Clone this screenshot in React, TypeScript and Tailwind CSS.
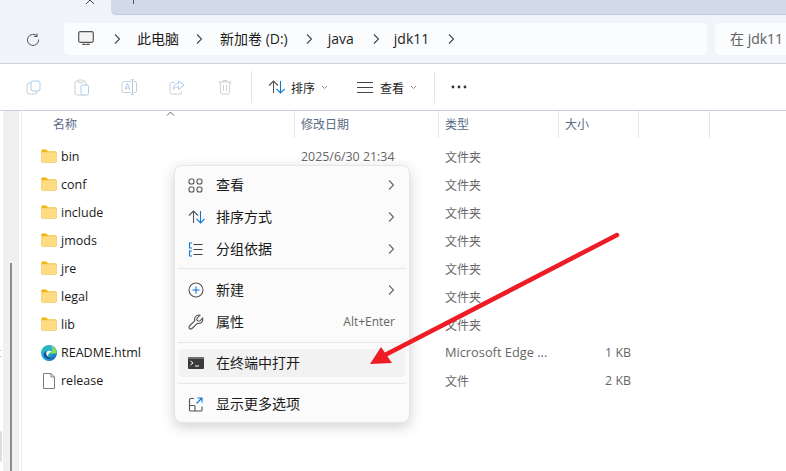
import React from "react";

const Font = "font-['Open_Sans','Noto_Sans_CJK_SC',sans-serif]";

function Folder() {
  return (
    <svg width="16" height="14" viewBox="0 0 16 14" className="shrink-0">
      <path d="M0.5 2a1 1 0 0 1 1-1.5h3.6l2 2H14.5a1 1 0 0 1 1 1v1H0.5z" fill="#f5b100" />
      <rect x="0.5" y="3" width="15" height="10.5" rx="1" fill="#fedc82" stroke="#eec35a" strokeWidth="0.6" />
    </svg>
  );
}

function Edge() {
  return (
    <svg width="16" height="16" viewBox="0 0 16 16" className="shrink-0">
      <defs>
        <linearGradient id="eg" x1="0" y1="0" x2="1" y2="1">
          <stop offset="0" stopColor="#2fc2a8" />
          <stop offset="0.55" stopColor="#2aa5dc" />
          <stop offset="1" stopColor="#0c59a4" />
        </linearGradient>
      </defs>
      <circle cx="8" cy="8" r="8" fill="url(#eg)" />
      <path d="M15.5 6.5C15 3 12 1.6 9 1.8 12 3 11.5 6 10.5 6.8 9.5 5.6 6.5 5.6 5.4 7.6 4.6 9.5 5.8 12 8.6 12.2 6.5 11 7 8.6 9 8.6h6.4z" fill="#7fe05a" />
      <path d="M5.5 8C5.5 11.5 8.5 13.5 12 12.6 10 14.6 5 14.8 3 11 2.3 9.5 3 6.8 5.5 6z" fill="#0e4f95" />
      <path d="M7.6 8.6a2.6 2.6 0 0 1 3-1.6c-.2-1.4-4-2.4-5.2.6C5 9 5.6 11 7 11.6 7 10.6 7 9.4 7.6 8.6z" fill="#fff" />
    </svg>
  );
}

function FileIcon() {
  return (
    <svg width="14" height="16" viewBox="0 0 14 16" className="shrink-0">
      <path d="M1.5.5h7.5l3.5 3.5v11.5h-11z" fill="#fff" stroke="#7c7c7c" />
      <path d="M9 .5V4h3.5" fill="none" stroke="#7c7c7c" />
    </svg>
  );
}

function Chevron({ c = "#555" }: { c?: string }) {
  return (
    <svg width="8" height="12" viewBox="0 0 8 12">
      <path d="M2 1.5L6.5 6 2 10.5" fill="none" stroke={c} strokeWidth="1.1" />
    </svg>
  );
}

function SortIcon() {
  return (
    <svg width="18" height="14" viewBox="0 0 18 14" fill="none" strokeWidth="1.1">
      <path d="M5.5 13V1M1 5.5L5.5 1 10 5.5" stroke="#555" />
      <path d="M12.5 1v12M8.5 8.8L12.5 13l4.2-4.2" stroke="#0a78d7" />
    </svg>
  );
}

function TinyDown() {
  return (
    <svg width="7" height="5" viewBox="0 0 7 5">
      <path d="M1 1l2.5 2.5L6 1" fill="none" stroke="#888" />
    </svg>
  );
}

const rows = [
  { n: "bin", i: "f", d: "2025/6/30 21:34", t: "文件夹" },
  { n: "conf", i: "f", t: "文件夹" },
  { n: "include", i: "f", t: "文件夹" },
  { n: "jmods", i: "f", t: "文件夹" },
  { n: "jre", i: "f", t: "文件夹" },
  { n: "legal", i: "f", t: "文件夹" },
  { n: "lib", i: "f", t: "文件夹" },
  { n: "README.html", i: "e", t: "Microsoft Edge ...", s: "1 KB", latin: true },
  { n: "release", i: "r", t: "文件", s: "2 KB" },
];

function MenuRow({
  icon,
  label,
  arrow,
  hint,
  active,
}: {
  icon: React.ReactNode;
  label: string;
  arrow?: boolean;
  hint?: string;
  active?: boolean;
}) {
  return (
    <div className={`flex h-7 items-center rounded pl-[9px] pr-[10px] ${active ? "bg-[#f2f2f2]" : ""}`}>
      <div className="flex w-[28px] shrink-0 items-center">{icon}</div>
      <span className="text-[14px] leading-none text-[#1a1a1a]">{label}</span>
      <div className="ml-auto flex items-center">
        {arrow && <Chevron c="#666" />}
        {hint && <span className="text-[12px] text-[#666]">{hint}</span>}
      </div>
    </div>
  );
}

function ContextMenu() {
  return (
    <div className="absolute left-[174px] top-[165px] flex h-[258px] w-[236px] flex-col rounded-[8px] border border-[#e6e6e6] bg-[#fbfbfb] px-[4px] pt-[5px] shadow-[0_4px_14px_rgba(0,0,0,0.18)]">
      <div className="flex flex-col gap-[4px]">
        <MenuRow
          arrow
          label="查看"
          icon={
            <svg width="15" height="15" viewBox="0 0 15 15" fill="none" stroke="#555" strokeWidth="1.1">
              <rect x="1" y="1" width="5" height="5" rx="2" />
              <rect x="9" y="1" width="5" height="5" rx="2" />
              <rect x="1" y="9" width="5" height="5" rx="2" />
              <rect x="9" y="9" width="5" height="5" rx="2" />
            </svg>
          }
        />
        <MenuRow arrow label="排序方式" icon={<SortIcon />} />
        <MenuRow
          arrow
          label="分组依据"
          icon={
            <svg width="15" height="15" viewBox="0 0 15 15" fill="none" strokeWidth="1.1">
              <path d="M4 1H1.5v5H4M4 9H1.5v5H4" stroke="#0a78d7" />
              <path d="M5.5 2.5h9M5.5 7.5h9M5.5 12.5h9" stroke="#444" />
            </svg>
          }
        />
      </div>
      <div className="mx-[-1px] mb-[7px] mt-[5px] h-px bg-[#e6e6e6]" />
      <div className="flex flex-col gap-[4px]">
        <MenuRow
          arrow
          label="新建"
          icon={
            <svg width="16" height="16" viewBox="0 0 16 16" fill="none">
              <circle cx="8" cy="8" r="7" stroke="#555" strokeWidth="1.1" />
              <path d="M8 4.5v7M4.5 8h7" stroke="#0a78d7" strokeWidth="1.1" />
            </svg>
          }
        />
        <MenuRow
          hint="Alt+Enter"
          label="属性"
          icon={
            <svg width="16" height="16" viewBox="0 0 16 16" fill="none" stroke="#555" strokeWidth="1.1">
              <path d="M10.5 1a4.3 4.3 0 0 1 1.4.3L9.4 3.8a1.9 1.9 0 0 0 2.8 2.8l2.5-2.5A4.3 4.3 0 0 1 9.3 9.3L4 14.5a1.7 1.7 0 0 1-2.5-2.5L6.8 6.7A4.3 4.3 0 0 1 10.5 1z" />
            </svg>
          }
        />
      </div>
      <div className="mx-[-1px] mb-[6px] mt-[6px] h-px bg-[#e6e6e6]" />
      <MenuRow
        active
        label="在终端中打开"
        icon={
          <svg width="16" height="12" viewBox="0 0 16 12">
            <rect width="16" height="12" rx="1" fill="#3a3a3a" />
            <rect width="16" height="2" fill="#6e6e6e" />
            <path d="M2.5 4L5 6 2.5 8" fill="none" stroke="#fff" strokeWidth="1" />
            <path d="M7 9h4" stroke="#fff" />
          </svg>
        }
      />
      <div className="mx-[-1px] mb-[6px] mt-[6px] h-px bg-[#e6e6e6]" />
      <MenuRow
        label="显示更多选项"
        icon={
          <svg width="15" height="15" viewBox="0 0 15 15" fill="none" strokeWidth="1.1">
            <path d="M6 1.5H2.5a1 1 0 0 0-1 1V13a1 1 0 0 0 1 1H13a1 1 0 0 0 1-1V9.5" stroke="#555" />
            <path d="M1.5 8.5H6a1 1 0 0 1 1 1V14" stroke="#555" />
            <path d="M9.5 1H14v4.5M14 1L8.5 6.5" stroke="#0a78d7" />
          </svg>
        }
      />
    </div>
  );
}

function ToolIcon({ children }: { children: React.ReactNode }) {
  return <div className="flex w-[48px] shrink-0 items-center justify-center">{children}</div>;
}

export default function App() {
  return (
    <div className={`relative flex h-[471px] w-[786px] flex-col overflow-hidden bg-white ${Font}`}>
      {/* tab strip */}
      <div className="flex h-[15px] shrink-0 bg-[#f3f4f9]">
        <div className="relative w-[111px] shrink-0">
          <svg width="10" height="5" viewBox="0 0 10 5" className="absolute left-[85px] top-0">
            <path d="M1 4l4-4 4 4" fill="none" stroke="#444" strokeWidth="1" />
          </svg>
        </div>
        <div className="relative flex-1 rounded-bl-[5px] border-b border-[#c2cbde] bg-[#d2daea]">
          <div className="ml-[22px] h-[4px] w-px bg-[#555]" />
        </div>
      </div>

      {/* address row */}
      <div className="flex h-[49px] shrink-0 items-center border-b border-[#c9cfdd] bg-[#f3f4f9] pb-[1px]">
        <div className="flex w-[64px] shrink-0 justify-center pl-[4px] pr-[2px]">
          <svg width="14" height="14" viewBox="0 0 14 14" fill="none" stroke="#555" strokeWidth="1">
            <path d="M11 1.5v3h-3M11.2 4.2A5.6 5.6 0 1 0 12.6 7.5" />
          </svg>
        </div>
        <div className="flex h-[32px] w-[643px] shrink-0 items-center rounded-[5px] bg-[#fbfcfe] pl-[14px] text-[14px] text-[#1c1c1c]">
          <svg width="16" height="15" viewBox="0 0 16 15" fill="none">
            <rect x="0.7" y="0.7" width="14.6" height="10.6" rx="1.5" fill="#f3f3f3" stroke="#555" strokeWidth="1.2" />
            <path d="M4 13.5h8M6 11.5v2M10 11.5v2" stroke="#666" />
          </svg>
          <div className="ml-[19px] flex w-[8px] justify-center">
            <Chevron c="#444" />
          </div>
          <span className="ml-[16px]">此电脑</span>
          <div className="ml-[16px] flex w-[8px] justify-center">
            <Chevron c="#444" />
          </div>
          <span className="ml-[17px] whitespace-nowrap">新加卷 (D:)</span>
          <div className="ml-[17px] flex w-[8px] justify-center">
            <Chevron c="#444" />
          </div>
          <span className="ml-[15px]">java</span>
          <div className="ml-[18px] flex w-[8px] justify-center">
            <Chevron c="#444" />
          </div>
          <span className="ml-[14px]">jdk11</span>
          <div className="ml-[18px] flex w-[8px] justify-center">
            <Chevron c="#444" />
          </div>
        </div>
        <div className="ml-[8px] flex h-[32px] flex-1 items-center rounded-l-[5px] bg-[#fbfcfe] pl-[15px] text-[14px] text-[#5f5f5f]">
          <span className="whitespace-nowrap">在 jdk11</span>
        </div>
      </div>

      {/* toolbar */}
      <div className="flex h-[47px] shrink-0 items-center border-b border-[#c9cfdd] bg-white pl-[9px]">
        <ToolIcon>
          <svg width="15" height="15" viewBox="0 0 15 15" fill="none">
            <rect x="1" y="3" width="10" height="11" rx="2" stroke="#cfcfcf" />
            <rect x="5" y="1" width="9" height="10" rx="2" fill="#fff" stroke="#a8cdf0" />
          </svg>
        </ToolIcon>
        <ToolIcon>
          <svg width="15" height="17" viewBox="0 0 15 17" fill="none">
            <rect x="1" y="2" width="11" height="14" rx="2" stroke="#cfcfcf" />
            <rect x="4" y="1" width="5" height="2.5" rx="1" fill="#fff" stroke="#cfcfcf" />
            <rect x="7" y="6" width="7.5" height="10" rx="1.5" fill="#fff" stroke="#a8cdf0" />
          </svg>
        </ToolIcon>
        <ToolIcon>
          <svg width="17" height="16" viewBox="0 0 17 16" fill="none">
            <path d="M10 2.5H2.5a1.5 1.5 0 0 0-1.5 1.5v8a1.5 1.5 0 0 0 1.5 1.5H10M13 2.5h1a1.5 1.5 0 0 1 1.5 1.5v8a1.5 1.5 0 0 1-1.5 1.5h-1" stroke="#cfcfcf" />
            <path d="M4 11l2.5-6.5L9 11M4.8 9h3.4" stroke="#a8cdf0" />
            <path d="M11.5 1v14M10 .8h3M10 15.2h3" stroke="#a8cdf0" />
          </svg>
        </ToolIcon>
        <ToolIcon>
          <svg width="16" height="15" viewBox="0 0 16 15" fill="none">
            <path d="M5.5 2.5H2.5A1.5 1.5 0 0 0 1 4v8.5A1.5 1.5 0 0 0 2.5 14H11a1.5 1.5 0 0 0 1.5-1.5V11" stroke="#cfcfcf" />
            <path d="M9.5 1v2.5C6 3.5 4.5 6 4.5 9.5 5.5 7.5 7 6.8 9.5 6.8v2.7L15 5.2z" stroke="#a8cdf0" />
          </svg>
        </ToolIcon>
        <ToolIcon>
          <svg width="14" height="16" viewBox="0 0 14 16" fill="none" stroke="#cfcfcf">
            <path d="M0.5 3h13M5 3V1.5h4V3M2 3l.8 11a1.2 1.2 0 0 0 1.2 1h6a1.2 1.2 0 0 0 1.2-1L12 3M5.5 6v6M8.5 6v6" />
          </svg>
        </ToolIcon>
        <div className="ml-[2px] mr-[16px] h-[32px] w-px bg-[#e6e6e6]" />
        <SortIcon />
        <span className="ml-[5px] pt-[3px] text-[12px] text-[#1c1c1c]">排序</span>
        <div className="ml-[6px] mr-[29px]">
          <TinyDown />
        </div>
        <svg width="16" height="11" viewBox="0 0 16 11" stroke="#444">
          <path d="M0 .5h16M0 5.5h16M0 10.5h16" />
        </svg>
        <span className="ml-[7px] pt-[3px] text-[12px] text-[#1c1c1c]">查看</span>
        <div className="ml-[6px] mr-[17px]">
          <TinyDown />
        </div>
        <div className="h-[32px] w-px bg-[#e6e6e6]" />
        <svg width="16" height="4" viewBox="0 0 16 4" className="ml-[16px]" fill="#333">
          <circle cx="2" cy="2" r="1.4" />
          <circle cx="8" cy="2" r="1.4" />
          <circle cx="14" cy="2" r="1.4" />
        </svg>
      </div>

      {/* main */}
      <div className="flex min-h-0 flex-1">
        {/* nav pane */}
        <div className="relative w-[22px] shrink-0 overflow-hidden border-r border-[#eeeeee] bg-white pl-[3px] pr-[2px]">
          <div className="h-full bg-[#f0f0f0]" />
          <div className="absolute bottom-0 left-[10px] top-[152px] w-[2px] bg-[#8c8c8c]" />
          <span className="absolute left-[-4px] top-[232px] text-[13px] leading-[18px] text-[#10355f]">t</span>
          <div className="absolute left-0 top-[320px] h-[31px] w-[2px] rounded-r bg-[#dddddd]" />
        </div>

        {/* list */}
        <div className="relative min-w-0 flex-1 text-[12px]">
          <svg width="9" height="5" viewBox="0 0 9 5" className="absolute left-[144px] top-0">
            <path d="M1 4.5L4.5 1 8 4.5" fill="none" stroke="#666" />
          </svg>
          <div className="grid h-[27px] grid-cols-[272px_144px_120px_80px_71px_1fr] items-center text-[#5a6b84]">
            <span className="pl-[31px]">名称</span>
            <span className="flex h-full items-center border-l border-[#e4e6ea] pl-[6px]">修改日期</span>
            <span className="flex h-full items-center border-l border-[#e4e6ea] pl-[6px]">类型</span>
            <span className="flex h-full items-center border-l border-[#e4e6ea] pl-[6px]">大小</span>
            <span className="h-full border-l border-[#e4e6ea]" />
            <span className="h-full border-l border-[#e4e6ea]" />
          </div>
          <div className="flex flex-col pt-[5px]">
            {rows.map((r) => (
              <div key={r.n} className="grid h-[28px] grid-cols-[272px_144px_120px_80px_71px_1fr] items-center">
                <div className="flex items-center pl-[19px] text-[12.5px] text-[#1a1a1a]">
                  <div className={`flex w-[20px] shrink-0 justify-center pr-[4px] ${r.i === "f" ? "mb-[2px]" : ""}`}>
                    {r.i === "f" ? <Folder /> : r.i === "e" ? <Edge /> : <FileIcon />}
                  </div>
                  {r.n}
                </div>
                <span className="whitespace-nowrap pl-[7px] text-[12.4px] text-[#666]">{r.d}</span>
                <span className={`whitespace-nowrap pl-[7px] text-[#666] ${r.latin ? "text-[12.8px]" : "pt-[1px] text-[12px]"}`}>{r.t}</span>
                <span className="whitespace-nowrap pr-[7px] text-right text-[12.4px] text-[#666]">{r.s}</span>
              </div>
            ))}
          </div>
        </div>
      </div>

      <ContextMenu />

      {/* annotation arrow */}
      <svg width="786" height="471" viewBox="0 0 786 471" className="pointer-events-none absolute left-0 top-0">
        <path d="M617 235L385 355" stroke="#ee1c25" strokeWidth="4.5" strokeLinecap="round" fill="none" />
        <path d="M370 364L381 347L392 363z" fill="#ee1c25" />
      </svg>
    </div>
  );
}
